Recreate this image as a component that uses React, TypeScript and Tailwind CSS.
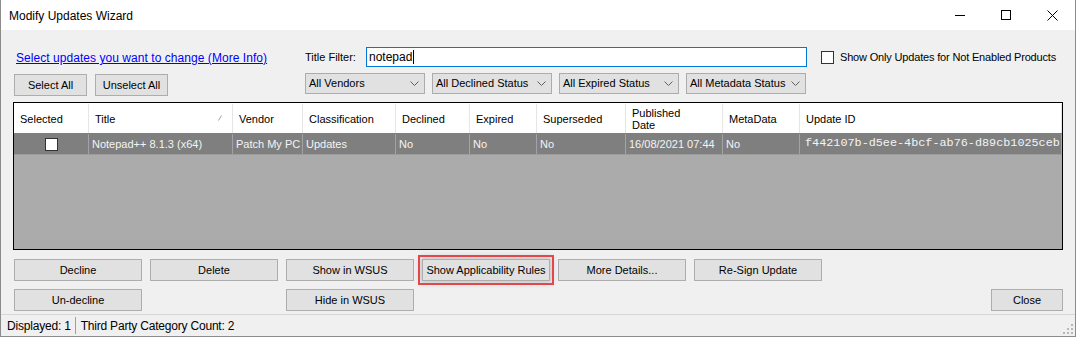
import React from "react";

const sans = "font-['Liberation_Sans',Arial,sans-serif]";

const columns = [
  { label: "Selected", w: "w-[75px]" },
  { label: "Title", w: "w-[144px]", sort: true },
  { label: "Vendor", w: "w-[70px]" },
  { label: "Classification", w: "w-[93px]" },
  { label: "Declined", w: "w-[74px]" },
  { label: "Expired", w: "w-[67px]" },
  { label: "Superseded", w: "w-[89px]" },
  { label: "Published\nDate", w: "w-[97px]" },
  { label: "MetaData", w: "w-[77px]" },
  { label: "Update ID", w: "flex-1" },
];

const row = [
  "",
  "Notepad++ 8.1.3 (x64)",
  "Patch My PC",
  "Updates",
  "No",
  "No",
  "No",
  "16/08/2021 07:44",
  "No",
  "f442107b-d5ee-4bcf-ab76-d89cb1025ceb",
];

function Btn({ children, className = "" }: { children: React.ReactNode; className?: string }) {
  return (
    <div
      className={`flex h-[22px] items-center justify-center border border-[#adadad] bg-[#e1e1e1] text-[11px] text-black ${className}`}
    >
      {children}
    </div>
  );
}

function Combo({ label }: { label: string }) {
  return (
    <div className="flex h-[21px] w-[120px] items-center justify-between border border-[#acacac] bg-[#e1e1e1] pl-[3px] pr-[5px] text-[11px] text-black">
      <span>{label}</span>
      <svg width="9" height="5" viewBox="0 0 9 5" className="text-[#606060]">
        <polyline points="0.5,0.5 4.5,4.5 8.5,0.5" fill="none" stroke="currentColor" strokeWidth="1" />
      </svg>
    </div>
  );
}

export default function App() {
  return (
    <div className={`flex h-[337px] w-[1076px] flex-col border-x border-b border-[#8c8c8c] ${sans}`}>
      {/* title bar */}
      <div className="flex h-[30px] shrink-0 items-center bg-white">
        <span className="pl-[8px] pt-[2px] text-[12px] text-black">Modify Updates Wizard</span>
        <div className="ml-auto flex h-full">
          <div className="flex w-[46px] items-center justify-center">
            <div className="h-px w-[10px] bg-black" />
          </div>
          <div className="flex w-[46px] items-center justify-center">
            <div className="h-[10px] w-[10px] border border-black" />
          </div>
          <div className="flex w-[46px] items-center justify-center">
            <svg width="11" height="11" viewBox="0 0 11 11">
              <path d="M0.5 0.5 L10.5 10.5 M10.5 0.5 L0.5 10.5" stroke="black" strokeWidth="1" />
            </svg>
          </div>
        </div>
      </div>

      {/* body */}
      <div className="flex flex-1 flex-col bg-[#f0f0f0]">
        <div className="mt-[17px] flex h-[20px] items-center">
          <div className="w-[304px] pl-[15px]">
            <span className="text-[12px] tracking-[0.05px] text-[#0000ff] underline">
              Select updates you want to change (More Info)
            </span>
          </div>
          <span className="w-[61px] text-[11px] text-black">Title Filter:</span>
          <div className="flex h-[20px] w-[441px] items-center border border-[#0078d7] bg-white pl-[2px] text-[12px] text-black">
            notepad<span className="ml-px inline-block h-[14px] w-px bg-black" />
          </div>
          <div className="ml-[14px] h-[13px] w-[13px] border border-[#333] bg-white" />
          <span className="ml-[6px] text-[11px] tracking-[-0.17px] text-black">
            Show Only Updates for Not Enabled Products
          </span>
        </div>

        <div className="mt-[6px] flex h-[21px] items-start">
          <div className="flex w-[304px] gap-[8px] pl-[13px]">
            <Btn className="mt-px h-[21px] w-[73px]">Select All</Btn>
            <Btn className="mt-px h-[21px] w-[73px]">Unselect All</Btn>
          </div>
          <div className="flex gap-[7px]">
            <Combo label="All Vendors" />
            <Combo label="All Declined Status" />
            <Combo label="All Expired Status" />
            <Combo label="All Metadata Status" />
          </div>
        </div>

        {/* data grid */}
        <div className="ml-[12px] mt-[8px] flex h-[148px] w-[1050px] flex-col border border-black bg-[#ababab]">
          <div className="flex h-[30px] bg-white pt-px text-[11px] leading-[12px] text-black">
            {columns.map((c) => (
              <div
                key={c.label}
                className={`relative flex items-center whitespace-pre border-r border-[#e5e5e5] pl-[6px] ${c.w}`}
              >
                {c.label}
                {c.sort && (
                  <svg width="4" height="6" viewBox="0 0 4 6" className="absolute right-[10px] top-[11px]">
                    <path d="M0.5 5.5 L3.5 0.5" stroke="#a0a0a0" strokeWidth="1" />
                  </svg>
                )}
              </div>
            ))}
          </div>
          <div className="flex h-[22px] border-b border-[#9c9c9c] bg-[#7f7f7f] pt-px text-[11px] text-[#f4f4f4]">
            {row.map((v, i) => (
              <div
                key={i}
                className={`flex items-center border-r border-[#a3a3a3] ${columns[i].w} ${
                  i === 0 ? "justify-center" : i === 9 ? "pl-[5px]" : "pl-[3px]"
                } ${i === 9 ? "font-['Liberation_Mono','Courier_New',monospace] text-[11.8px]" : ""}`}
              >
                {i === 0 ? <div className="h-[13px] w-[13px] border border-[#333] bg-white" /> : v}
              </div>
            ))}
          </div>
        </div>

        {/* buttons */}
        <div className="mt-[9px] flex gap-[8px] pl-[13px]">
          <Btn className="w-[128px]">Decline</Btn>
          <Btn className="w-[128px]">Delete</Btn>
          <Btn className="w-[128px]">Show in WSUS</Btn>
          <Btn className="w-[128px] outline-2 outline-offset-[2px] outline-[#e2474b] shadow-[0_0_6px_2px_rgba(0,0,0,0.18)]">
            Show Applicability Rules
          </Btn>
          <Btn className="w-[128px]">More Details...</Btn>
          <Btn className="w-[128px]">Re-Sign Update</Btn>
        </div>
        <div className="mt-[8px] flex pl-[13px]">
          <Btn className="w-[128px]">Un-decline</Btn>
          <Btn className="ml-[144px] w-[128px]">Hide in WSUS</Btn>
          <Btn className="ml-auto mr-[12px] w-[72px]">Close</Btn>
        </div>

        {/* status bar */}
        <div className="mt-[3px] flex flex-1 items-center border-t border-[#d7d7d7] text-[12px] tracking-[-0.2px] text-black">
          <span className="pl-[6px] pr-[4px]">Displayed: 1</span>
          <div className="h-[17px] w-px bg-[#a0a0a0]" />
          <span className="pl-[5px]">Third Party Category Count: 2</span>
          <svg width="10" height="10" viewBox="0 0 10 10" className="mb-[2px] ml-auto mr-[2px] mt-auto">
            {[
              [8, 0],
              [4, 4],
              [8, 4],
              [0, 8],
              [4, 8],
              [8, 8],
            ].map(([x, y]) => (
              <rect key={`${x}-${y}`} x={x} y={y} width="2" height="2" fill="#b8b8b8" />
            ))}
          </svg>
        </div>
      </div>
    </div>
  );
}
